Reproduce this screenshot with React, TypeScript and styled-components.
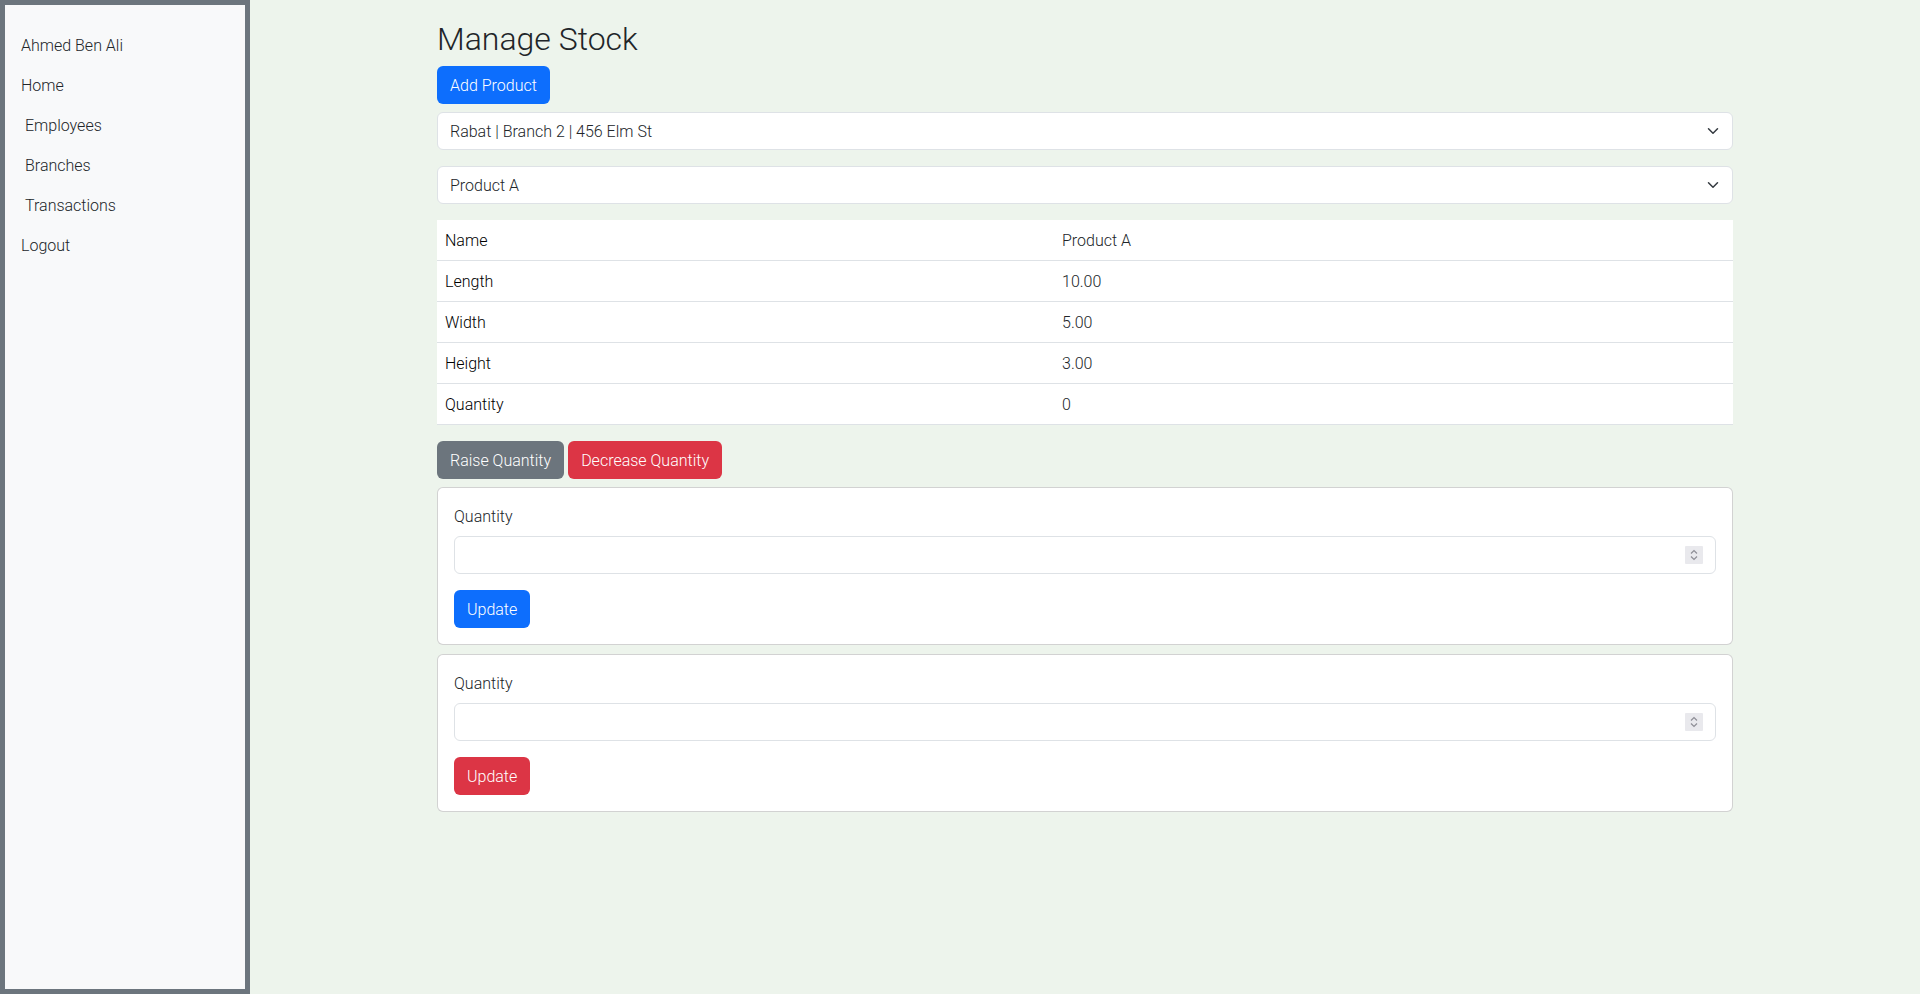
import styled, { createGlobalStyle } from "styled-components";

const GlobalStyle = createGlobalStyle`
  * {
    box-sizing: border-box;
  }
  body {
    margin: 0;
    font-family: Roboto, "Liberation Sans", sans-serif;
    font-weight: 300;
    font-size: 16px;
    line-height: 1.5;
    color: #212529;
    background: #edf4ec;
  }
`;

const Layout = styled.div`
  display: flex;
  min-height: 100vh;
`;

const Sidebar = styled.aside`
  width: 250px;
  flex-shrink: 0;
  height: 100vh;
  border: 5px solid #6c757d;
  background: #f8f9fa;
  padding: 20px 0;
`;

const NavList = styled.nav`
  display: flex;
  flex-direction: column;
`;

const NavLink = styled.a<{ $indent?: boolean }>`
  display: block;
  padding: 9px 16px 7px ${(p) => (p.$indent ? "20px" : "16px")};
  color: #212529;
  text-decoration: none;
  cursor: pointer;
`;

const Main = styled.main`
  flex: 1;
  padding-top: 20px;
`;

const Container = styled.div`
  max-width: 1320px;
  margin: 0 auto;
  padding: 0 12px;
`;

const Title = styled.h2`
  margin: 0 0 8px;
  font-size: 32px;
  font-weight: 300;
  line-height: 1.2;
`;

const Button = styled.button<{ $variant?: "primary" | "secondary" | "danger" }>`
  display: inline-block;
  height: 38px;
  padding: 7px 12px 5px;
  font-family: inherit;
  font-size: 16px;
  font-weight: 300;
  line-height: 1.5;
  color: #fff;
  border: 1px solid transparent;
  border-radius: 6px;
  cursor: pointer;
  background: ${(p) =>
    p.$variant === "secondary" ? "#6c757d" : p.$variant === "danger" ? "#dc3545" : "#0d6efd"};
`;

const TopAction = styled.div`
  margin-bottom: 8px;
`;

const SelectWrap = styled.div<{ $mb: number }>`
  position: relative;
  margin-bottom: ${(p) => p.$mb}px;
`;

const Select = styled.select`
  display: block;
  width: 100%;
  height: 38px;
  padding: 6px 36px 6px 12px;
  font-family: inherit;
  font-size: 16px;
  font-weight: 300;
  color: #212529;
  background: #fff;
  border: 1px solid #dee2e6;
  border-radius: 6px;
  appearance: none;
  -webkit-appearance: none;
  outline: none;
`;

const Chevron = styled.svg`
  position: absolute;
  right: 12px;
  top: 13px;
  pointer-events: none;
`;

const Table = styled.table`
  width: 100%;
  border-collapse: collapse;
  background: #fff;
  margin-bottom: 16px;
`;

const Cell = styled.td<{ $head?: boolean }>`
  padding: 9px 8px 7px;
  border-bottom: 1px solid #dee2e6;
  font-weight: 300;
  color: ${(p) => (p.$head ? "#000" : "#212529")};
  width: ${(p) => (p.$head ? "617px" : "auto")};
  line-height: 24px;
`;

const ButtonRow = styled.div`
  display: flex;
  gap: 4px;
  margin-bottom: 8px;
`;

const Card = styled.form`
  background: #fff;
  border: 1px solid rgba(0, 0, 0, 0.175);
  border-radius: 6px;
  padding: 16px;
  margin-bottom: 9px;
`;

const Label = styled.label`
  display: block;
  padding-top: 1px;
  margin-bottom: 7px;
`;

const InputWrap = styled.div`
  position: relative;
  margin-bottom: 16px;
`;

const NumberInput = styled.input`
  display: block;
  width: 100%;
  height: 38px;
  padding: 6px 40px 6px 12px;
  font-family: inherit;
  font-size: 16px;
  font-weight: 300;
  color: #212529;
  background: #fff;
  border: 1px solid #dee2e6;
  border-radius: 6px;
  outline: none;
  -moz-appearance: textfield;

  &::-webkit-inner-spin-button,
  &::-webkit-outer-spin-button {
    -webkit-appearance: none;
    margin: 0;
  }
`;

const Spinner = styled.svg`
  position: absolute;
  right: 13px;
  top: 10px;
  pointer-events: none;
`;

const rows = [
  ["Name", "Product A"],
  ["Length", "10.00"],
  ["Width", "5.00"],
  ["Height", "3.00"],
  ["Quantity", "0"],
];

function ChevronIcon() {
  return (
    <Chevron width="16" height="12" viewBox="0 0 16 16">
      <path d="m2 5 6 6 6-6" fill="none" stroke="#343a40" strokeWidth="2" strokeLinecap="round" strokeLinejoin="round" />
    </Chevron>
  );
}

function SpinnerIcon() {
  return (
    <Spinner width="18" height="18" viewBox="0 0 18 18">
      <rect width="18" height="18" rx="1" fill="#e9e9ed" />
      <path d="M6 7.5 9 4.5 12 7.5M6 10.5 9 13.5 12 10.5" fill="none" stroke="#8e8e96" strokeWidth="1.2" />
    </Spinner>
  );
}

function QuantityForm({ variant }: { variant: "primary" | "danger" }) {
  return (
    <Card onSubmit={(e) => e.preventDefault()}>
      <Label>Quantity</Label>
      <InputWrap>
        <NumberInput type="number" />
        <SpinnerIcon />
      </InputWrap>
      <Button $variant={variant} type="submit">
        Update
      </Button>
    </Card>
  );
}

export default function App() {
  return (
    <>
      <GlobalStyle />
      <Layout>
        <Sidebar>
          <NavList>
            <NavLink>Ahmed Ben Ali</NavLink>
            <NavLink>Home</NavLink>
            <NavLink $indent>Employees</NavLink>
            <NavLink $indent>Branches</NavLink>
            <NavLink $indent>Transactions</NavLink>
            <NavLink>Logout</NavLink>
          </NavList>
        </Sidebar>
        <Main>
          <Container>
            <Title>Manage Stock</Title>
            <TopAction>
              <Button>Add Product</Button>
            </TopAction>
            <SelectWrap $mb={16}>
              <Select defaultValue="b2">
                <option value="b2">Rabat | Branch 2 | 456 Elm St</option>
              </Select>
              <ChevronIcon />
            </SelectWrap>
            <SelectWrap $mb={16}>
              <Select defaultValue="a">
                <option value="a">Product A</option>
              </Select>
              <ChevronIcon />
            </SelectWrap>
            <Table>
              <tbody>
                {rows.map(([k, v]) => (
                  <tr key={k}>
                    <Cell $head>{k}</Cell>
                    <Cell>{v}</Cell>
                  </tr>
                ))}
              </tbody>
            </Table>
            <ButtonRow>
              <Button $variant="secondary">Raise Quantity</Button>
              <Button $variant="danger">Decrease Quantity</Button>
            </ButtonRow>
            <QuantityForm variant="primary" />
            <QuantityForm variant="danger" />
          </Container>
        </Main>
      </Layout>
    </>
  );
}
